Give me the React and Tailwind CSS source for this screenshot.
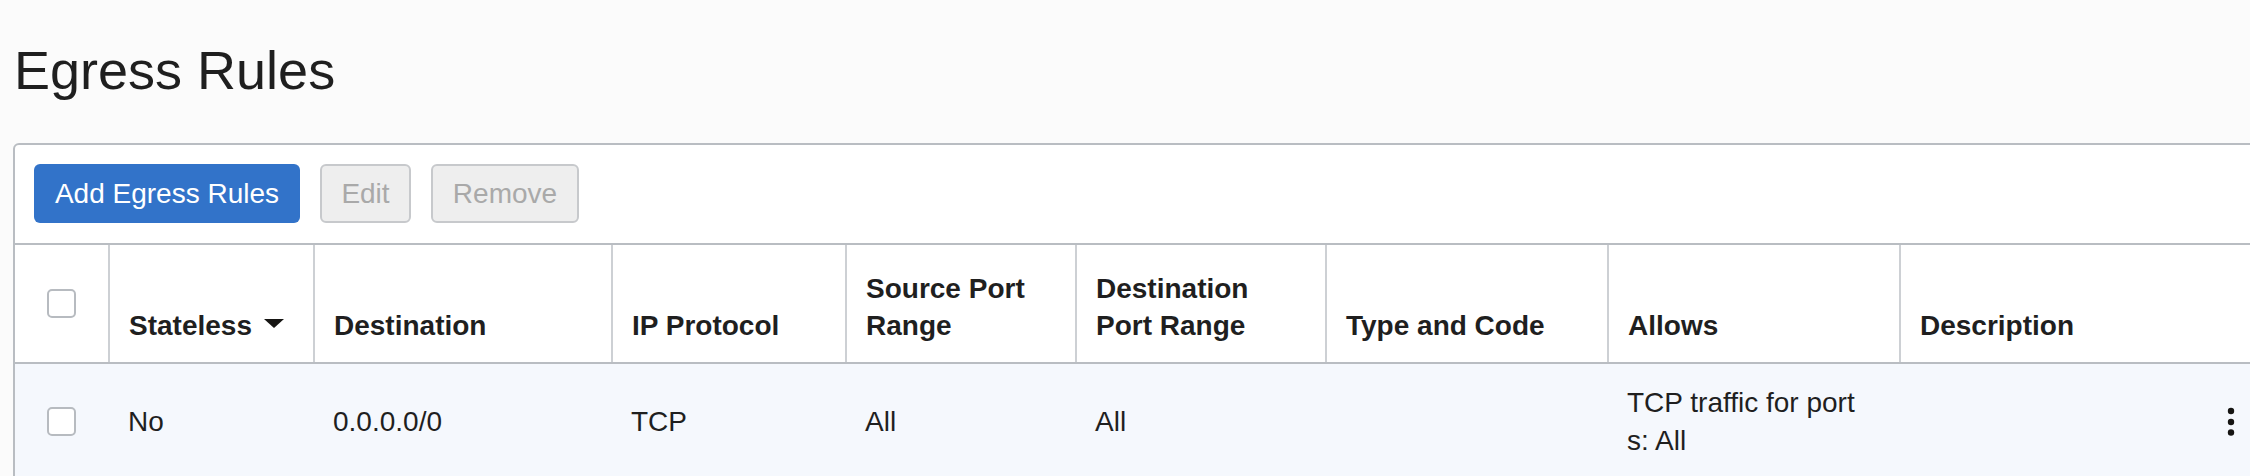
import React from "react";

const COLS = [
  { key: "check", w: "w-[93px]" },
  { key: "stateless", label: "Stateless", w: "w-[205px]", sort: true },
  { key: "dest", label: "Destination", w: "w-[298px]" },
  { key: "proto", label: "IP Protocol", w: "w-[234px]" },
  { key: "src", label: ["Source Port", "Range"], w: "w-[230px]" },
  { key: "dport", label: ["Destination", "Port Range"], w: "w-[250px]" },
  { key: "type", label: "Type and Code", w: "w-[282px]" },
  { key: "allows", label: "Allows", w: "w-[292px]" },
  { key: "desc", label: "Description", w: "w-[301px]" },
];

const ROWS = [
  { id: 1, stateless: "No", dest: "0.0.0.0/0", proto: "TCP", src: "All", dport: "All", type: "", allows: "TCP traffic for ports: All", desc: "" },
];

function Checkbox() {
  return <span className="block h-[29px] w-[29px] rounded-[5px] border-2 border-[#b7bbc0] bg-white" />;
}

function Kebab() {
  return (
    <svg width="8" height="30" viewBox="0 0 8 30" className="block">
      <circle cx="4" cy="4" r="3.2" fill="#161513" />
      <circle cx="4" cy="15" r="3.2" fill="#161513" />
      <circle cx="4" cy="25.5" r="3.2" fill="#161513" />
    </svg>
  );
}

export default function App() {
  return (
    <div className="h-[476px] w-[2250px] overflow-hidden bg-[#fbfbfb] font-['Liberation_Sans',Arial,sans-serif] text-[#1f1f1f]">
      <h1 className="pl-[14px] pt-[43px] text-[54px] font-normal leading-none">Egress Rules</h1>

      <div className="ml-[13px] mt-[46px] min-h-[360px] w-[2251px] rounded-tl-[6px] border-2 border-[#b9bdc2] bg-white">
        <div className="flex gap-[20px] border-b-2 border-[#b9bdc2] px-[19px] pb-[20px] pt-[19px] text-[28px]">
          <button className="flex h-[59px] w-[266px] items-center justify-center rounded-[6px] bg-[#3273c9] text-white">
            Add Egress Rules
          </button>
          <button className="flex h-[59px] w-[91px] items-center justify-center rounded-[6px] border-2 border-[#c7c9cc] bg-[#eeeeee] text-[#a9a9a9]">
            Edit
          </button>
          <button className="flex h-[59px] w-[148px] items-center justify-center rounded-[6px] border-2 border-[#c7c9cc] bg-[#eeeeee] text-[#a9a9a9]">
            Remove
          </button>
        </div>

        <div className="flex h-[119px] border-b-2 border-[#b9bdc2] text-[28px] font-bold leading-[37px] text-[#1f1f1f]">
          {COLS.map((c) =>
            c.key === "check" ? (
              <div key={c.key} className={`${c.w} flex shrink-0 items-center justify-center`}>
                <Checkbox />
              </div>
            ) : (
              <div key={c.key} className={`${c.w} flex shrink-0 flex-col justify-end border-l-2 border-[#cdd0d4] px-[19px] pb-[18px]`}>
                {Array.isArray(c.label) ? (
                  c.label.map((l) => <span key={l}>{l}</span>)
                ) : (
                  <span className="whitespace-nowrap">
                    {c.label}
                    {c.sort && (
                      <svg width="20" height="9" viewBox="0 0 20 9" className="ml-[12px] inline-block align-[7px]">
                        <path d="M0 0h20L10 9z" fill="#161513" />
                      </svg>
                    )}
                  </span>
                )}
              </div>
            )
          )}
          <div className="flex-1" />
        </div>

        {ROWS.map((r) => (
          <div key={r.id} className="flex h-[115px] items-center bg-[#f5f8fd] text-[28px] leading-[38px] text-[#1f1f1f]">
            <div className="flex w-[93px] shrink-0 justify-center">
              <Checkbox />
            </div>
            <div className="w-[205px] shrink-0 pl-[20px]">{r.stateless}</div>
            <div className="w-[298px] shrink-0 pl-[20px]">{r.dest}</div>
            <div className="w-[234px] shrink-0 pl-[20px]">{r.proto}</div>
            <div className="w-[230px] shrink-0 pl-[20px]">{r.src}</div>
            <div className="w-[250px] shrink-0 pl-[20px]">{r.dport}</div>
            <div className="w-[282px] shrink-0 pl-[20px]">{r.type}</div>
            <div className="w-[292px] shrink-0 pl-[20px]">
              <div className="w-[236px] break-all">{r.allows}</div>
            </div>
            <div className="w-[301px] shrink-0 pl-[20px]">{r.desc}</div>
            <div className="flex flex-1 justify-center">
              <Kebab />
            </div>
          </div>
        ))}
      </div>
    </div>
  );
}
